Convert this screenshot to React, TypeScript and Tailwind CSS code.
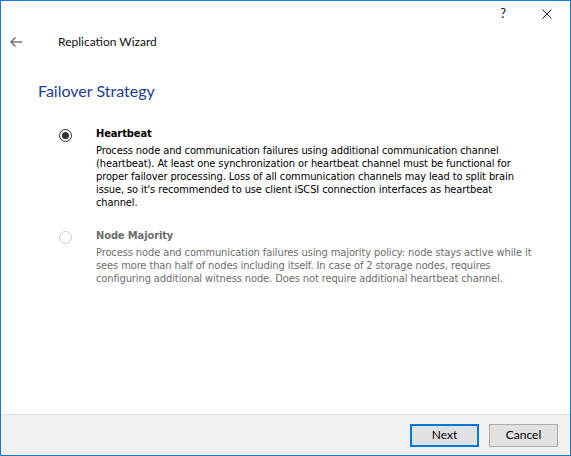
import React from 'react';

const body = { fontFamily: '"DejaVu Sans Condensed", "Liberation Sans", sans-serif' };

const Radio: React.FC<{ checked?: boolean; disabled?: boolean }> = ({ checked, disabled }) => (
  <div
    className={`w-[13px] h-[13px] rounded-full border flex items-center justify-center bg-white ${
      disabled ? 'border-[#cccccc]' : 'border-[#333333]'
    }`}
  >
    {checked && <div className="w-[7px] h-[7px] rounded-full bg-[#333333]" />}
  </div>
);

const Option: React.FC<{ title: string; text: string; checked?: boolean; disabled?: boolean }> = ({
  title,
  text,
  checked,
  disabled,
}) => (
  <div className="flex pl-[58px]">
    <div className="w-[37px] shrink-0 pt-[2px]">
      <Radio checked={checked} disabled={disabled} />
    </div>
    <div
      className={`w-[440px] text-[11px] leading-[13px] tracking-[-0.1px] ${disabled ? 'text-[#6d6d6d]' : 'text-black'}`}
      style={body}
    >
      <div className="font-bold mb-[4px]">{title}</div>
      <p>{text}</p>
    </div>
  </div>
);

export default function App() {
  return (
    <div
      className="w-[571px] h-[456px] flex flex-col border border-[#1a7ad0] bg-white overflow-hidden"
      style={{ fontFamily: 'Lato, "Open Sans", sans-serif' }}
    >
      {/* title bar */}
      <div className="h-[26px] flex items-center justify-end pr-[18px] gap-[36px] text-[#111]">
        <span className="text-[13px]">?</span>
        <svg width="10" height="10" viewBox="0 0 10 10" stroke="#222" strokeWidth="1">
          <path d="M0.5 0.5 L9.5 9.5 M9.5 0.5 L0.5 9.5" />
        </svg>
      </div>

      {/* header */}
      <div className="h-[29px] flex items-center">
        <svg className="ml-[8px]" width="14" height="12" viewBox="0 0 14 12" fill="none" stroke="#7a7a7a" strokeWidth="1.6">
          <path d="M13 6 H2 M6.5 1.5 L2 6 L6.5 10.5" />
        </svg>
        <span className="ml-[35px] text-[12px] text-[#111]">Replication Wizard</span>
      </div>

      <div className="pl-[37px] pt-[23px] text-[16px] text-[#1e3c94]">Failover Strategy</div>

      <div className="flex flex-col gap-[20px] pt-[24px] flex-1">
        <Option
          checked
          title="Heartbeat"
          text="Process node and communication failures using additional communication channel (heartbeat). At least one synchronization or heartbeat channel must be functional for proper failover processing. Loss of all communication channels may lead to split brain issue, so it's recommended to use client iSCSI connection interfaces as heartbeat channel."
        />
        <Option
          disabled
          title="Node Majority"
          text="Process node and communication failures using majority policy: node stays active while it sees more than half of nodes including itself. In case of 2 storage nodes, requires configuring additional witness node. Does not require additional heartbeat channel."
        />
      </div>

      {/* footer */}
      <div className="h-[41px] shrink-0 bg-[#f0f0f0] border-t border-[#dfdfdf] flex items-center justify-end gap-[10px] pr-[12px]">
        <button className="w-[69px] h-[23px] bg-[#e1e1e1] border-2 border-[#0078d7] text-[12px] text-black">
          Next
        </button>
        <button className="w-[69px] h-[23px] bg-[#e1e1e1] border border-[#adadad] text-[12px] text-black">
          Cancel
        </button>
      </div>
    </div>
  );
}
